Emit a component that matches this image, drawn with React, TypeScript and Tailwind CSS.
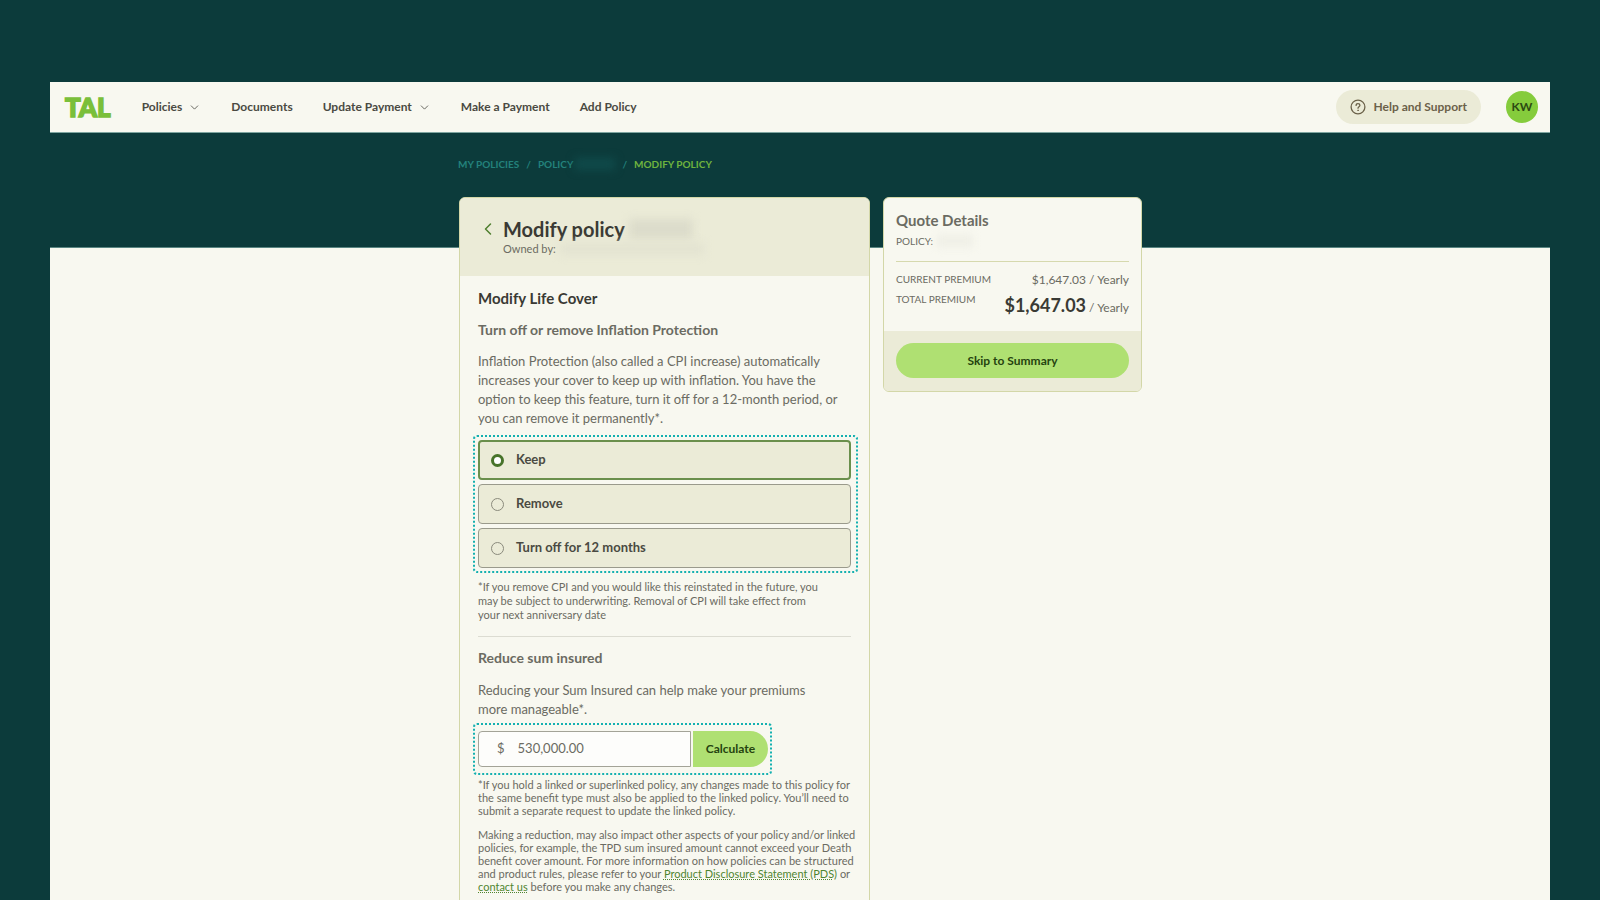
import React, { useState } from 'react'
import { ChevronDown, ChevronLeft } from 'lucide-react'

interface NavItem {
    label: string
    hasMenu?: boolean
}

interface CoverOption {
    value: string
    label: string
}

const NAV_ITEMS: NavItem[] = [
    { label: 'Policies', hasMenu: true },
    { label: 'Documents' },
    { label: 'Update Payment', hasMenu: true },
    { label: 'Make a Payment' },
    { label: 'Add Policy' },
]

const COVER_OPTIONS: CoverOption[] = [
    { value: 'keep', label: 'Keep' },
    { value: 'remove', label: 'Remove' },
    { value: 'pause', label: 'Turn off for 12 months' },
]

const HelpIcon = () => (
    <svg viewBox="0 0 16 16" className="w-4 h-4" fill="none" stroke="currentColor" strokeLinecap="round">
        <circle cx="8" cy="8" r="6.9" strokeWidth="1.3" />
        <path d="M6.1 6.4C6.1 5.3 6.9 4.6 8 4.6s1.9.7 1.9 1.7c0 1.4-1.9 1.4-1.9 2.9" strokeWidth="1.3" />
        <circle cx="8" cy="11.3" r=".4" strokeWidth=".8" />
    </svg>
)

const Header = () => (
    <header className="flex items-center h-[51px] pl-[15px] pr-3 bg-[#f8f8f0] border-b border-[#7fa5a0]">
        <a href="#" className="text-[26px] leading-none font-black text-[#7abf3a] [-webkit-text-stroke:1.5px_#7abf3a]">
            TAL
        </a>
        <nav className="flex items-center gap-[30px] ml-[31px] text-[12px] font-bold text-[#4a4a42]">
            {NAV_ITEMS.map(({ label, hasMenu }) => (
                <a key={label} href="#" className="flex items-center gap-[6px]">
                    {label}
                    {hasMenu && <ChevronDown className="w-[13px] h-[13px]" strokeWidth={1.5} />}
                </a>
            ))}
        </nav>
        <button className="flex items-center gap-2 h-[34px] ml-auto px-[14px] rounded-full bg-[#ebebd7] text-[12px] font-bold text-[#6b6149]">
            <HelpIcon />
            Help and Support
        </button>
        <button className="w-8 h-8 ml-[25px] rounded-full bg-[#85cc3c] text-[12px] font-bold text-[#2c4a12]">KW</button>
    </header>
)

const Breadcrumb = () => (
    <nav className="flex items-center gap-[7px] pt-6 text-[10px] leading-[14px] font-bold uppercase text-[#23827c]">
        <a href="#">My policies</a>
        <span>/</span>
        <a href="#" className="flex items-center gap-[2px]">
            Policy
            <span className="w-10 h-3 bg-[#0f4a4a] blur-xs" />
        </a>
        <span>/</span>
        <span className="text-[#6fb43e]">Modify policy</span>
    </nav>
)

const InflationOptions = () => {
    const [selected, setSelected] = useState('keep')
    return (
        <fieldset className="flex flex-col gap-1 -ml-[5px] -mr-[7px] mt-[7px] p-[3px] pr-[5px] border-2 border-dotted border-[#14b0b0] rounded-[4px]">
            {COVER_OPTIONS.map(({ value, label }) => (
                <label
                    key={value}
                    className="flex items-center gap-3 h-10 px-3 border border-[#9a9a8c] rounded-[4px] bg-[#ebebd7] text-[13px] font-bold text-[#4a4a42] has-checked:border-2 has-checked:px-[11px] has-checked:border-[#6a8f4c]"
                >
                    <input
                        type="radio"
                        name="inflation"
                        value={value}
                        checked={selected === value}
                        onChange={() => setSelected(value)}
                        className="appearance-none w-[13px] h-[13px] rounded-full border border-[#8a8a7c] checked:border-[3px] checked:border-[#47732a] checked:bg-white"
                    />
                    {label}
                </label>
            ))}
        </fieldset>
    )
}

const SumInsuredForm = () => (
    <form
        className="flex gap-[2px] w-[299px] -ml-[5px] mt-1 py-[6px] pl-[3px] pr-[2px] border-2 border-dotted border-[#14b0b0] rounded-[4px]"
        onSubmit={(e) => e.preventDefault()}
    >
        <div className="flex items-center flex-1 min-w-0 h-9 pl-[18px] border border-[#a3a397] rounded-l-[4px] bg-[#fdfdfb] text-[13px] text-[#6b6b62]">
            <label htmlFor="sum-insured">$</label>
            <input
                id="sum-insured"
                defaultValue="530,000.00"
                className="w-full min-w-0 pl-[13px] bg-transparent outline-none"
            />
        </div>
        <button className="h-9 w-[75px] rounded-r-full bg-[#afe072] text-[12px] font-bold text-[#25430f]">Calculate</button>
    </form>
)

const ModifyCard = () => (
    <section className="border border-[#d3d7a8] rounded-t-md bg-[#f8f8f0] text-[#6b6b62] overflow-hidden">
        <div className="flex items-start h-[78px] pl-[18px] pt-[19px] bg-[#ebebd7]">
            <button aria-label="Back" className="mt-[2px] text-[#4f7f2e]">
                <ChevronLeft className="w-5 h-5" strokeWidth={1.8} />
            </button>
            <div className="ml-[5px]">
                <div className="flex items-center gap-1">
                    <h1 className="text-[20px] leading-6 font-bold text-[#3a3a34]">Modify policy</h1>
                    <span className="w-16 h-5 bg-[#dcdccb] blur-xs" />
                </div>
                <div className="flex items-center gap-1 text-[11px] leading-4">
                    Owned by:
                    <span className="w-36 h-3 bg-[#e3e3d1] blur-xs" />
                </div>
            </div>
        </div>
        <div className="px-[18px] pt-3">
            <h2 className="text-[15px] leading-5 font-bold text-[#3a3a34]">Modify Life Cover</h2>
            <h3 className="mt-3 text-[14px] leading-5 font-bold">Turn off or remove Inflation Protection</h3>
            <p className="mt-3 text-[13px] leading-[19px]">
                Inflation Protection (also called a CPI increase) automatically increases your cover to keep up with
                inflation. You have the option to keep this feature, turn it off for a 12-month period, or you can remove
                it permanently*.
            </p>
            <InflationOptions />
            <p className="mt-[7px] pr-6 text-[11px] leading-[14px]">
                *If you remove CPI and you would like this reinstated in the future, you may be subject to underwriting.
                Removal of CPI will take effect from your next anniversary date
            </p>
            <hr className="mt-[14px] border-[#dcdcd2]" />
            <h3 className="mt-[11px] text-[14px] leading-5 font-bold">Reduce sum insured</h3>
            <p className="mt-[13px] pr-6 text-[13px] leading-[19px]">
                Reducing your Sum Insured can help make your premiums more manageable*.
            </p>
            <SumInsuredForm />
            <p className="mt-[3px] -mr-2 text-[11px] leading-[13px]">
                *If you hold a linked or superlinked policy, any changes made to this policy for the same benefit type
                must also be applied to the linked policy. You’ll need to submit a separate request to update the linked
                policy.
            </p>
            <p className="mt-[11px] -mr-2 pb-8 text-[11px] leading-[13px]">
                Making a reduction, may also impact other aspects of your policy and/or linked policies, for example, the
                TPD sum insured amount cannot exceed your Death benefit cover amount. For more information on how
                policies can be structured and product rules, please refer to your{' '}
                <a href="#" className="text-[#4f8530] underline decoration-dotted">
                    Product Disclosure Statement (PDS)
                </a>{' '}
                or{' '}
                <a href="#" className="text-[#4f8530] underline decoration-dotted">
                    contact us
                </a>{' '}
                before you make any changes.
            </p>
        </div>
    </section>
)

const QuoteCard = () => (
    <aside className="border border-[#d3d7a8] rounded-md bg-[#f8f8f0] text-[#6b6b62] overflow-hidden">
        <div className="px-3 pt-3 pb-[7px]">
            <h2 className="text-[15px] leading-5 font-bold">Quote Details</h2>
            <div className="flex items-center gap-1 mt-[3px] text-[10px] leading-4">
                POLICY:
                <span className="w-9 h-3 bg-[#efefe6] blur-xs" />
            </div>
            <hr className="mt-3 border-[#d6d9ae]" />
            <dl className="mt-2">
                <div className="flex justify-between leading-[19px]">
                    <dt className="text-[10px]">CURRENT PREMIUM</dt>
                    <dd className="text-[12px]">$1,647.03 / Yearly</dd>
                </div>
                <div className="flex justify-between">
                    <dt className="text-[10px] leading-5">TOTAL PREMIUM</dt>
                    <dd className="text-[12px] leading-8">
                        <strong className="text-[18px] text-[#3a3a34]">$1,647.03</strong> / Yearly
                    </dd>
                </div>
            </dl>
        </div>
        <div className="px-3 pt-3 pb-[13px] bg-[#ebebd7]">
            <button className="w-full h-[35px] rounded-full bg-[#afe072] text-[12px] font-bold text-[#25430f]">
                Skip to Summary
            </button>
        </div>
    </aside>
)

const App = () => {
    return (
        <div className="h-screen px-[50px] pt-[82px] overflow-hidden bg-[#0c3b3b] font-['Lato',sans-serif]">
            <div className="min-h-full bg-[#f8f8f0]">
                <Header />
                <div className="h-[115px] bg-[#0c3b3b] border-b border-[#5a8682]">
                    <div className="w-full max-w-[684px] mx-auto">
                        <Breadcrumb />
                    </div>
                </div>
                <main className="relative grid grid-cols-[1fr_259px] items-start gap-[13px] w-full max-w-[684px] mx-auto -mt-[51px] pl-px">
                    <ModifyCard />
                    <QuoteCard />
                </main>
            </div>
        </div>
    )
}

export default App
